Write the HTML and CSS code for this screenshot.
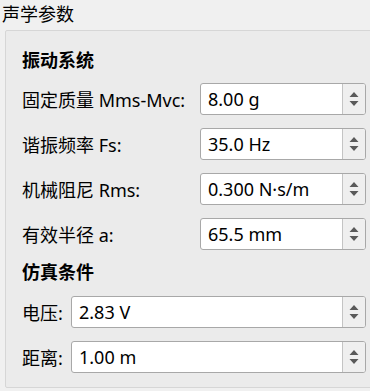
FILE: index.html
```html
<!DOCTYPE html>
<html lang="zh-CN">
<head>
  <meta charset="UTF-8" />
  <title>声学参数</title>
  <link rel="stylesheet" href="styles.css">
</head>
<body>

  <div class="group-title">声学参数</div>

  <div class="group">
    <div class="section">
      <h2>振动系统</h2>

      <div class="row">
        <label>固定质量 Mms-Mvc:</label>
        <div class="spin">
          <span class="value">8.00 g</span>
          <div class="arrows">
            <svg width="10" height="18" viewBox="0 0 10 18"><path d="M5 2 L9.5 7 L0.5 7 Z M0.5 11 L9.5 11 L5 16 Z" fill="#5a5a5a"/></svg>
          </div>
        </div>
      </div>

      <div class="row">
        <label>谐振频率 Fs:</label>
        <div class="spin">
          <span class="value">35.0 Hz</span>
          <div class="arrows">
            <svg width="10" height="18" viewBox="0 0 10 18"><path d="M5 2 L9.5 7 L0.5 7 Z M0.5 11 L9.5 11 L5 16 Z" fill="#5a5a5a"/></svg>
          </div>
        </div>
      </div>

      <div class="row">
        <label>机械阻尼 Rms:</label>
        <div class="spin">
          <span class="value">0.300 N·s/m</span>
          <div class="arrows">
            <svg width="10" height="18" viewBox="0 0 10 18"><path d="M5 2 L9.5 7 L0.5 7 Z M0.5 11 L9.5 11 L5 16 Z" fill="#5a5a5a"/></svg>
          </div>
        </div>
      </div>

      <div class="row">
        <label>有效半径 a:</label>
        <div class="spin">
          <span class="value">65.5 mm</span>
          <div class="arrows">
            <svg width="10" height="18" viewBox="0 0 10 18"><path d="M5 2 L9.5 7 L0.5 7 Z M0.5 11 L9.5 11 L5 16 Z" fill="#5a5a5a"/></svg>
          </div>
        </div>
      </div>
    </div>

    <div class="section short">
      <h2>仿真条件</h2>

      <div class="row">
        <label>电压:</label>
        <div class="spin">
          <span class="value">2.83 V</span>
          <div class="arrows">
            <svg width="10" height="18" viewBox="0 0 10 18"><path d="M5 2 L9.5 7 L0.5 7 Z M0.5 11 L9.5 11 L5 16 Z" fill="#5a5a5a"/></svg>
          </div>
        </div>
      </div>

      <div class="row">
        <label>距离:</label>
        <div class="spin">
          <span class="value">1.00 m</span>
          <div class="arrows">
            <svg width="10" height="18" viewBox="0 0 10 18"><path d="M5 2 L9.5 7 L0.5 7 Z M0.5 11 L9.5 11 L5 16 Z" fill="#5a5a5a"/></svg>
          </div>
        </div>
      </div>
    </div>
  </div>

</body>
</html>
```

FILE: styles.css
```css
body {
  font-family: "Noto Sans", "Noto Sans CJK SC", sans-serif;
  font-size: 18px;
  color: #000;
  background-color: #f0f0f0;
  margin: 0;
  padding: 0;
  overflow: hidden;
}

.group-title {
  height: 30px;
  line-height: 30px;
  padding-left: 2px;
  margin-top: -1px;
  margin-bottom: 1px;
}

.group {
  margin-left: 5px;
  width: 375px;
  height: 358px;
  background-color: #ebebeb;
  border: 1px solid #d6d6d6;
  border-radius: 2px;
  padding: 19px 0 0 16px;
  box-sizing: border-box;
}

.section {
  display: flex;
  flex-direction: column;
  gap: 13px;
  width: 344px;
}

.section.short {
  margin-top: 12px;
  gap: 13px;
}

h2 {
  font-size: 18px;
  font-weight: bold;
  line-height: 20px;
  height: 20px;
  margin: 0;
}

.row {
  display: flex;
  align-items: center;
}

.row label {
  width: 178px;
  flex-shrink: 0;
  white-space: nowrap;
}

.short .row label {
  width: 49px;
}

.short h2 + .row {
  margin-top: 1px;
}

.spin {
  flex: 1;
  height: 32px;
  display: flex;
  background-color: #fff;
  border: 1px solid #a8a8a8;
  border-radius: 3px;
  box-sizing: border-box;
  overflow: hidden;
}

.value {
  flex: 1;
  padding-left: 7px;
  line-height: 30px;
}

.arrows {
  width: 22px;
  border-left: 1px solid #c4c4c4;
  background-color: #efefef;
  display: flex;
  align-items: center;
  justify-content: center;
}
```
